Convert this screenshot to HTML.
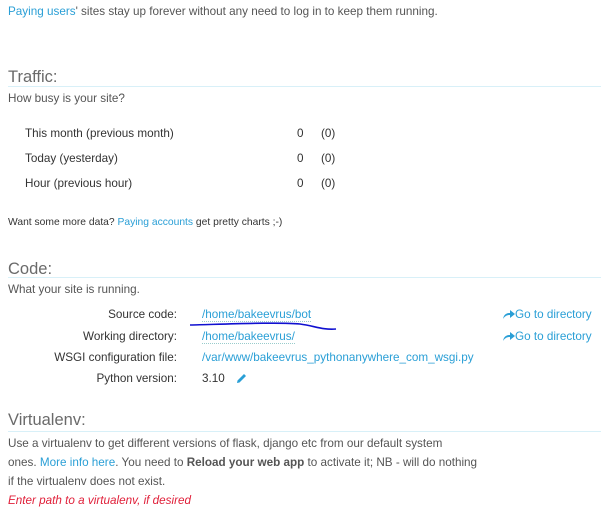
<!DOCTYPE html>
<html><head><meta charset="utf-8"><style>
body{margin:0;width:601px;height:527px;background:#fff;font-family:"Liberation Sans",sans-serif;color:#555;font-size:11.7px;position:relative;overflow:hidden}
.a{position:absolute;white-space:nowrap;line-height:14px}
a,.l{color:#2a9fd6;text-decoration:none}
h2{position:absolute;margin:0;font-weight:normal;font-size:16.5px;color:#6a6a6a;left:8px;line-height:20px}
.hr{position:absolute;left:8px;right:0;height:1px;background:#d8f0f8}
.r{color:#333}
.lab{position:absolute;right:424px;text-align:right;color:#333;white-space:nowrap;line-height:14px}
.d{border-bottom:1px dotted #9cc}
</style></head><body>
<div class="a" style="left:8px;top:5px"><span class="l">Paying users</span>' sites stay up forever without any need to log in to keep them running.</div>

<h2 style="top:67px">Traffic:</h2>
<div class="hr" style="top:86px"></div>
<div class="a" style="left:8px;top:92px">How busy is your site?</div>
<div class="a r" style="left:25px;top:127px">This month (previous month)</div>
<div class="a r" style="left:25px;top:152px">Today (yesterday)</div>
<div class="a r" style="left:25px;top:177px">Hour (previous hour)</div>
<div class="a r" style="left:297px;top:127px">0</div><div class="a r" style="left:321px;top:127px">(0)</div>
<div class="a r" style="left:297px;top:152px">0</div><div class="a r" style="left:321px;top:152px">(0)</div>
<div class="a r" style="left:297px;top:177px">0</div><div class="a r" style="left:321px;top:177px">(0)</div>
<div class="a r" style="left:8px;top:216px;font-size:10.3px">Want some more data? <span class="l">Paying accounts</span> get pretty charts ;-)</div>

<h2 style="top:259px">Code:</h2>
<div class="hr" style="top:277px"></div>
<div class="a" style="left:8px;top:283px">What your site is running.</div>
<div class="lab" style="top:308px">Source code:</div>
<div class="lab" style="top:330px">Working directory:</div>
<div class="lab" style="top:351px">WSGI configuration file:</div>
<div class="lab" style="top:372px">Python version:</div>
<div class="a l" style="left:202px;top:308px"><span class="d">/home/bakeevrus/bot</span></div>
<div class="a l" style="left:202px;top:330px"><span class="d">/home/bakeevrus/</span></div>
<div class="a l" style="left:202px;top:351px">/var/www/bakeevrus_pythonanywhere_com_wsgi.py</div>
<div class="a r" style="left:202px;top:372px">3.10</div>
<svg style="position:absolute;left:235px;top:372px" width="13" height="13" viewBox="0 0 13 13"><path d="M2 11 L2.5 8.5 L9 2 L11 4 L4.5 10.5 Z" fill="#2a9fd6"/></svg>
<svg style="position:absolute;left:503px;top:309px" width="12" height="11" viewBox="0 0 12 11"><path d="M0 10 C1 5 4 4 7 4 V1 L12 5 L7 9 V6 C4 6 2 7 0 10Z" fill="#2a9fd6"/></svg>
<svg style="position:absolute;left:503px;top:331px" width="12" height="11" viewBox="0 0 12 11"><path d="M0 10 C1 5 4 4 7 4 V1 L12 5 L7 9 V6 C4 6 2 7 0 10Z" fill="#2a9fd6"/></svg>
<div class="a l" style="left:515px;top:308px">Go to directory</div>
<div class="a l" style="left:515px;top:330px">Go to directory</div>
<svg style="position:absolute;left:0;top:0" width="601" height="527"><path d="M190 325 C230 324 280 322 300 324 C315 326 322 330 336 329" stroke="#1010d0" stroke-width="1.6" fill="none"/></svg>

<h2 style="top:410px">Virtualenv:</h2>
<div class="hr" style="top:431px"></div>
<div class="a" style="left:8px;top:434px;line-height:19px">Use a virtualenv to get different versions of flask, django etc from our default system<br>ones. <span class="l">More info here</span>. You need to <b>Reload your web app</b> to activate it; NB - will do nothing<br>if the virtualenv does not exist.</div>
<div class="a" style="left:8px;top:494px;color:#e0203a;font-style:italic">Enter path to a virtualenv, if desired</div>
</body></html>
